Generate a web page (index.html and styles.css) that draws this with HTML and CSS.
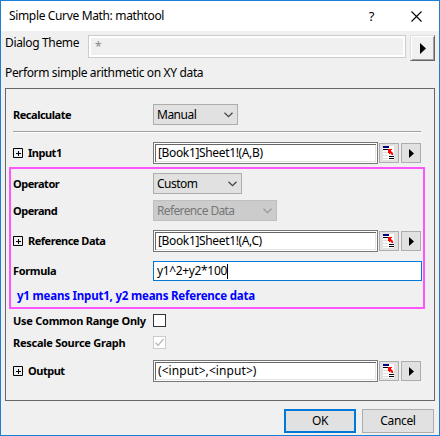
FILE: index.html
```
<!DOCTYPE html>
<html lang="en">
<head>
<meta charset="utf-8">
<title>Simple Curve Math: mathtool</title>
<link rel="stylesheet" href="styles.css">
</head>
<body>
<svg class="defs" width="0" height="0">
  <symbol id="pick" viewBox="0 0 12 14"><path fill="#fff" d="M0 0h11v14H0z"/><path fill="#ddd" d="M0 6h5v1H0zM0 9h5v1H0zM0 12h5v1H0zM6 8h5v1H6z"/><path fill="#000080" d="M0 0h6v2H0z"/><path d="M0 3h5v1H0zM6 10h5v1H6zM6 12h5v1H6z"/><path fill="red" d="M5 3h4v1H8v1l2 2v2H9L7 7v1H6V7H5z"/></symbol>
  <symbol id="arrow" viewBox="0 0 5 9"><path d="M0 0l5 4.5L0 9z"/></symbol>
  <symbol id="chevron" viewBox="0 0 9 6"><path d="M.5 .7l4 4 4-4" fill="none" stroke="currentColor" stroke-width="1.25"/></symbol>
  <symbol id="plus" viewBox="0 0 10 10"><path d="M.5 .5h9v9h-9zM3 5.500h5M5.500 3v5" fill="none" stroke="#000"/></symbol>
</svg>
<div class="window">
  <header class="titlebar">
    <span class="title">Simple Curve Math: mathtool</span>
    <span class="help">?</span>
    <svg class="close" width="11" height="11"><path d="M.5 .5l10 10M10.500 .5l-10 10" stroke="#000" stroke-width="1.1"/></svg>
  </header>
  <div class="theme">
    <span class="theme-label">Dialog Theme</span>
    <div class="theme-input">*</div>
    <button class="theme-button"><svg width="6" height="11" viewBox="0 0 6 11"><path d="M0 0l6 5.500L0 11z"/></svg></button>
  </div>
  <p class="description">Perform simple arithmetic on XY data</p>
  <main class="panel">
    <div class="row"><span class="label">Recalculate</span><div class="select manual"><span>Manual</span><svg width="9" height="6"><use href="#chevron"/></svg></div></div>
    <div class="separator"></div>
    <div class="row input-row"><span class="label expand"><svg width="10" height="10"><use href="#plus"/></svg><b>Input1</b></span><div class="field"><span>[Book1]Sheet1!(A,B)</span></div><button class="small"><svg width="12" height="14"><use href="#pick"/></svg></button><button class="small next"><svg width="5" height="9"><use href="#arrow"/></svg></button></div>
    <section class="highlight">
      <div class="row operator"><span class="label">Operator</span><div class="select custom"><span>Custom</span><svg width="9" height="6"><use href="#chevron"/></svg></div></div>
      <div class="row operand"><span class="label">Operand</span><div class="select disabled"><span>Reference Data</span><svg width="9" height="6"><use href="#chevron"/></svg></div></div>
      <div class="row input-row"><span class="label expand"><svg width="10" height="10"><use href="#plus"/></svg><b>Reference Data</b></span><div class="field"><span>[Book1]Sheet1!(A,C)</span></div><button class="small"><svg width="12" height="14"><use href="#pick"/></svg></button><button class="small next"><svg width="5" height="9"><use href="#arrow"/></svg></button></div>
      <div class="row formula"><span class="label">Formula</span><div class="formula-field"><span>y1^2+y2*100</span><i class="caret"></i></div></div>
      <p class="note">y1 means Input1, y2 means Reference data</p>
    </section>
    <div class="row check common"><span class="label">Use Common Range Only</span><span class="box"></span></div>
    <div class="row check rescale"><span class="label">Rescale Source Graph</span><span class="box off"><svg width="11" height="11"><path d="M1.500 5.500l2.500 3 5.500-6.500" fill="none" stroke="#bbb" stroke-width="1.300"/></svg></span></div>
    <div class="row output"><span class="label expand"><svg width="10" height="10"><use href="#plus"/></svg><b>Output</b></span><div class="field angle"><span>(&lt;input&gt;,&lt;input&gt;)</span></div><button class="small"><svg width="12" height="14"><use href="#pick"/></svg></button><button class="small next"><svg width="5" height="9"><use href="#arrow"/></svg></button></div>
  </main>
  <footer class="actions"><button class="ok">OK</button><button class="cancel">Cancel</button></footer>
</div>
</body>
</html>
```
FILE: styles.css
```
* { box-sizing: border-box; }
body { margin: 0; font: 12px/16px "Noto Sans", "Open Sans", sans-serif; color: #000; letter-spacing: -0.35px; }
p { margin: 0; }
b { font-weight: inherit; }
button { padding: 0; font: inherit; letter-spacing: inherit; color: #000; }
svg { display: block; flex: none; }
span, b, p, button { white-space: nowrap; }
.defs { position: absolute; }
.window { width: 440px; height: 436px; border: 1px solid #1a80d5; background: #f0f0f0; }
.titlebar { height: 30px; background: #fff; display: flex; align-items: center; padding: 0 17px 0 8px; }
.title { flex: 1; }
.help { margin-right: 37px; font-size: 13px; }
.theme { display: flex; align-items: flex-start; height: 30px; padding: 4px 4px 0; }
.theme-label { width: 83px; }
.theme-input { width: 318px; height: 23px; border: 1px solid #ccc; box-shadow: inset 0 0 0 2px #fff; color: #888; padding: 3px 6px; }
.theme-button { margin-left: 4px; width: 25px; height: 26px; border: 1px solid; border-color: #ddd #666 #666 #ddd; box-shadow: inset 1px 1px #fff, inset -1px -1px #a0a0a0; background: #f0f0f0; display: flex; align-items: center; justify-content: center; }
.description { height: 27px; padding: 4px 0 0 4px; }
.panel { width: 430px; height: 313px; margin-left: 4px; border: 1px solid #666; padding: 15px 0 0 7px; }
.row { display: flex; align-items: center; height: 21px; }
.label { width: 140px; flex: none; font-size: 11px; font-weight: 700; letter-spacing: -0.48px; }
.expand { display: flex; align-items: center; gap: 5px; }
.select { height: 21px; border: 1px solid #adadad; background: #e1e1e1; color: #444; display: flex; align-items: center; justify-content: space-between; padding: 0 4px 0 3px; }
.select span { color: #000; letter-spacing: -0.5px; }
.manual { width: 85px; }
.custom { width: 89px; }
.disabled { width: 124px; background: #ccc; border-color: #bfbfbf; color: #999; }
.select.disabled span { color: #777; letter-spacing: -0.63px; }
.separator { width: 408px; height: 2px; margin: 6px 0 9px; background: #a0a0a0; border-bottom: 1px solid #fff; }
.input-row, .output { height: 22px; }
.field { width: 225px; height: 22px; margin-right: 1px; border: 1px solid #777; box-shadow: inset 0 0 0 1px #fff, inset 2px 2px #666, inset -2px -2px #e3e3e3; background: #fff; display: flex; align-items: center; padding-left: 4px; }
.angle { letter-spacing: 0.08px; }
.small { width: 20px; height: 20px; border: 1px solid #adadad; background: #e1e1e1; display: flex; align-items: center; justify-content: center; }
.next { margin-left: 2px; }
.highlight { width: 416px; height: 142px; margin: 3px 0 5px -4px; border: 2px solid #ff55ff; padding: 4px 0 0 2px; }
.operand { margin: 6px 0 9px; }
.formula { height: 20px; margin-top: 9px; }
.formula .label { letter-spacing: -0.35px; }
.formula-field { width: 269px; flex: none; height: 20px; border: 1px solid #0078d7; background: #fff; display: flex; align-items: center; padding-left: 3px; }
.caret { width: 1px; height: 15px; background: #000; }
.note { color: #00f; font-size: 11.5px; font-weight: 700; letter-spacing: -0.2px; margin: 7px 0 0 4px; }
.check { height: 13px; }
.check .label { letter-spacing: -0.26px; }
.box { width: 13px; height: 13px; border: 1px solid #333; background: #fff; }
.off { border-color: #ccc; }
.rescale { margin: 9px 0 11px; }
.actions { display: flex; gap: 6px; padding: 8px 0 0 283px; }
.actions button { width: 72px; height: 24px; border: 1px solid #adadad; background: #e1e1e1; }
.actions .ok { border: 2px solid #0078d7; }
```
